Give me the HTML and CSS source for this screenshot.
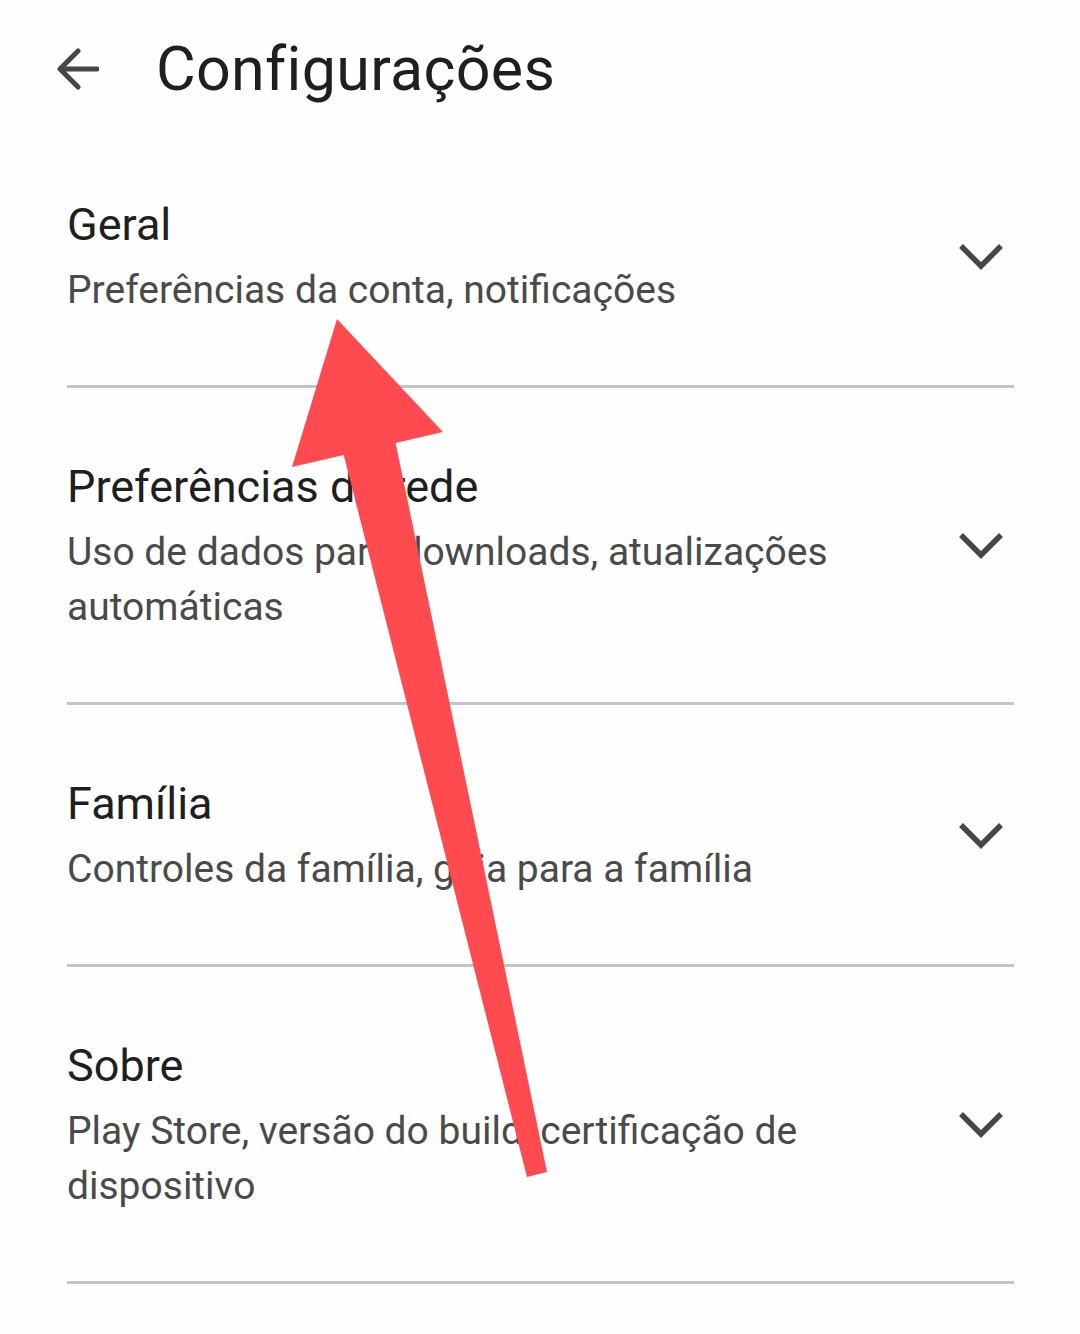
FILE: index.html
```html
<!DOCTYPE html>
<html lang="pt-BR">
<head>
<meta charset="utf-8">
<title>Configurações</title>
<link rel="stylesheet" href="styles.css">
</head>
<body>
<div class="page">
  <header class="topbar">
    <svg class="back" viewBox="0 0 42 42" width="42" height="42" aria-hidden="true">
      <path d="M40 21H4M21 3L3 21l18 18" fill="none" stroke="#444746" stroke-width="5" stroke-linecap="round" stroke-linejoin="round"/>
    </svg>
    <h1 class="title">Configurações</h1>
  </header>
  <ul class="list">
    <li class="row">
      <div class="text">
        <div class="row-title">Geral</div>
        <div class="row-sub">Preferências da conta, notificações</div>
      </div>
      <svg class="chev" viewBox="0 0 46 30" width="46" height="30" aria-hidden="true"><path d="M3 4l20 20L43 4" fill="none" stroke="#444746" stroke-width="5.5"/></svg>
    </li>
    <li class="row">
      <div class="text">
        <div class="row-title">Preferências de rede</div>
        <div class="row-sub">Uso de dados para downloads, atualizações automáticas</div>
      </div>
      <svg class="chev" viewBox="0 0 46 30" width="46" height="30" aria-hidden="true"><path d="M3 4l20 20L43 4" fill="none" stroke="#444746" stroke-width="5.5"/></svg>
    </li>
    <li class="row">
      <div class="text">
        <div class="row-title">Família</div>
        <div class="row-sub">Controles da família, guia para a família</div>
      </div>
      <svg class="chev" viewBox="0 0 46 30" width="46" height="30" aria-hidden="true"><path d="M3 4l20 20L43 4" fill="none" stroke="#444746" stroke-width="5.5"/></svg>
    </li>
    <li class="row">
      <div class="text">
        <div class="row-title">Sobre</div>
        <div class="row-sub">Play Store, versão do build, certificação de dispositivo</div>
      </div>
      <svg class="chev" viewBox="0 0 46 30" width="46" height="30" aria-hidden="true"><path d="M3 4l20 20L43 4" fill="none" stroke="#444746" stroke-width="5.5"/></svg>
    </li>
  </ul>
  <svg class="overlay" viewBox="0 0 1080 1334" width="1080" height="1334" aria-hidden="true">
    <polygon points="337,319 292,467 443,432" fill="#ff4b50"/>
    <polygon points="343,452 395,440 547,1172 527,1177" fill="#ff4b50"/>
  </svg>
</div>
</body>
</html>
```

FILE: styles.css
```css
* { box-sizing: border-box; }
html, body {
  margin: 0;
  padding: 0;
  background: #fefefe;
}
body {
  font-family: Roboto, "Noto Sans", "Liberation Sans", sans-serif;
  color: #1f1f1f;
}
.page {
  position: relative;
  width: 1080px;
  height: 1334px;
  overflow: hidden;
}
.topbar {
  display: flex;
  align-items: center;
  height: 114px;
  margin-top: 12px;
  padding-left: 57px;
}
.back {
  flex: none;
  display: block;
}
.title {
  margin: 0 0 0 57px;
  font-weight: 400;
  font-size: 61px;
  line-height: 72px;
  color: #1f1f1f;
  letter-spacing: 0.3px;
}
.list {
  list-style: none;
  margin: 0;
  padding: 0 66px 0 67px;
}
.row {
  display: flex;
  align-items: center;
  justify-content: space-between;
  padding: 69px 0 67px;
  border-bottom: 3px solid #c4c4c4;
}
.text {
  width: 820px;
}
.row-title {
  font-size: 45px;
  line-height: 60px;
  color: #1f1f1f;
}
.row-sub {
  margin-top: 8px;
  font-size: 39px;
  line-height: 55px;
  color: #4a4a4a;
}
.chev {
  flex: none;
  display: block;
  margin-right: 10px;
}
.overlay {
  position: absolute;
  left: 0;
  top: 0;
  pointer-events: none;
}
```
